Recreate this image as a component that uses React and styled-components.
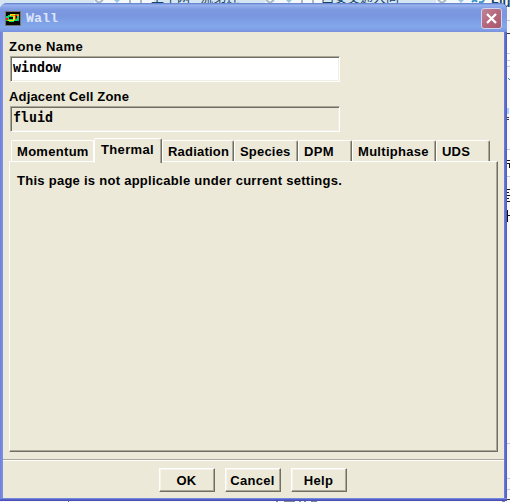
import React from "react";
import styled, { createGlobalStyle } from "styled-components";

const face = "#ece9d8";
const shade = "#aca899";
const dark = "#716f64";

const Global = createGlobalStyle`
  * { box-sizing: border-box; }
  body { margin: 0; overflow: hidden; background: #f6f9fc; }
`;

const Desktop = styled.main`
  position: relative;
  width: 510px;
  height: 502px;
  padding-top: 3px;
  overflow: hidden;
  background: #f8f8f9;
  font: bold 13px "Liberation Sans", Arial, sans-serif;
  color: #000;
`;

const Backdrop = styled.svg`
  position: absolute;
  inset: 0;
`;

const Window = styled.section`
  position: relative;
  display: flex;
  flex-direction: column;
  width: 507px;
  height: 498px;
  padding: 0 3px 3px;
  border-radius: 7px 7px 0 0;
  overflow: hidden;
  background: linear-gradient(90deg, #7080d8 0, #7b92e6 3px, #7b92e6 504px, #7284dc 504px, #6070d0 505px, #5458bc 507px);
  box-shadow: inset 0 -1px #4c50b4, inset 0 -2px #5560c8, inset 0 -3px #7488de;
`;

const TitleBar = styled.header`
  display: flex;
  align-items: center;
  flex: 0 0 29px;
  margin: 0 -3px;
  padding: 1px 5px 0;
  background: linear-gradient(#6280cc 0, #7590dc 1px, #9ab5ee 2px, #8ba7e8 4px, #7c98e0 7px, #7a96df 13px, #7e9fe6 18px, #83a8ea 24px, #7e9ce4 27px, #7890dc 29px);
`;

const Title = styled.h1`
  flex: 1;
  margin: 0 0 0 5px;
  padding-top: 1px;
  font: bold 13.33px "Liberation Mono", monospace;
  color: #dce6fa;
`;

const CloseButton = styled.button`
  display: grid;
  place-items: center;
  width: 21px;
  height: 21px;
  margin-top: 1px;
  padding: 0;
  border: 1px solid #d0d4f0;
  border-radius: 3px;
  background: linear-gradient(135deg, #c08498, #b4687c 50%, #a8586c);
`;

const Body = styled.div`
  display: flex;
  flex-direction: column;
  flex: 1;
  background: ${face};
`;

const Fields = styled.div`
  display: flex;
  flex-direction: column;
  height: 105px;
  padding: 6px 0 0 6px;
`;

const Field = styled.label`
  display: block;
  flex: 0 0 50px;
  width: 332px;
  line-height: 18px;
  letter-spacing: ${(p) => p.$spacing};
`;

const Input = styled.input`
  display: block;
  width: 330px;
  height: 26px;
  margin: 0 0 0 1px;
  padding: 0 2px 4px 2px;
  outline: 0;
  border: 1px solid;
  border-color: ${shade} #fff #fff ${shade};
  border-radius: 0;
  box-shadow: inset 1px 1px ${dark}, inset -1px -1px #f1efe2;
  background: ${(p) => (p.readOnly ? face : "#fff")};
  font: bold 13.3px "DejaVu Sans Mono", monospace;
  color: #000;
`;

const Tabs = styled.nav`
  display: flex;
  align-items: flex-end;
  height: 24px;
  padding-left: 8px;
`;

const Tab = styled.button`
  position: relative;
  z-index: ${(p) => (p.$active ? 1 : 0)};
  width: ${(p) => p.$width}px;
  height: ${(p) => (p.$active ? 25 : 21)}px;
  margin-bottom: ${(p) => (p.$active ? -2 : 0)}px;
  padding: ${(p) => (p.$active ? "0 0 4px 6px" : "1px 0 0 5px")};
  border: 0;
  border-top: 1px solid #fff;
  border-left: 1px solid #fff;
  border-right: 1px solid ${(p) => (p.$flat ? "#fff" : dark)};
  border-radius: 2px 2px 0 0;
  box-shadow: ${(p) => (p.$flat ? "none" : `inset -1px 0 ${shade}`)};
  background: ${face};
  font: inherit;
  letter-spacing: ${(p) => p.$spacing}px;
  color: #000;
  text-align: left;
  white-space: nowrap;
`;

const Panel = styled.section`
  width: 489px;
  height: 291px;
  margin-left: 6px;
  padding: 11px 7px;
  border: 1px solid;
  border-color: #fff ${dark} ${dark} #fff;
  box-shadow: inset -1px -1px ${shade};
  line-height: 16px;
  letter-spacing: 0.27px;
`;

const Footer = styled.footer`
  display: flex;
  justify-content: center;
  align-items: flex-start;
  gap: 10px;
  height: 39px;
  margin-top: 7px;
  padding: 8px 2px 0 0;
  border-top: 1px solid ${shade};
  box-shadow: inset 0 1px #fff;
`;

const Button = styled.button`
  width: 56px;
  height: 24px;
  padding: 0;
  border: 1px solid;
  border-color: #fff ${dark} ${dark} #fff;
  box-shadow: inset -1px -1px ${shade}, inset 1px 1px #f6f4ea;
  background: ${face};
  font: inherit;
  letter-spacing: 0.3px;
  color: #000;
`;

const tabs = [
  { name: "Momentum", width: 83, flat: true, spacing: 0.3 },
  { name: "Thermal", width: 68, active: true, spacing: 0.35 },
  { name: "Radiation", width: 72, spacing: 0.2 },
  { name: "Species", width: 64, spacing: 0.2 },
  { name: "DPM", width: 54, spacing: 0.3 },
  { name: "Multiphase", width: 84, spacing: 0.3 },
  { name: "UDS", width: 54, spacing: 0.2 },
];

function PageBehind() {
  return (
    <Backdrop width="510" height="502" viewBox="0 0 510 502">
      <path fill="#d5e6f2" d="M0 0h454v12H0z" />
      <path fill="#f3f8fc" d="M94 0h60v3H94zM265 0h60v3h-60zM436 0h38v3h-38z" />
      <g fill="none" stroke="#a9bac5" strokeWidth="2">
        <path d="M95 0l4 3 4-3M266 0l4 3 4-3M438 0l4 3 4-3M130 0v3M141 0v3M302 0v3M313 0v3" />
      </g>
      <path fill="#9cc5de" d="M114 0h6l-3 3zM286 0h6l-3 3zM458 0h6l-3 3z" />
      <g fill="#17466c" fontFamily="Noto Sans CJK SC, sans-serif" fontSize="13" fontWeight="400">
        <text x="151" y="2">上十网 - 流弟连</text>
        <text x="321" y="2">西安交通大同</text>
      </g>
      <path fill="none" stroke="#3d96c8" strokeWidth="2" d="M472 2q3-3 5 0M479 2q4 1 5-2" />
      <text x="491" y="7" fill="#17466c" fontFamily="Liberation Sans" fontWeight="bold" fontSize="13">Fluent</text>
      <path fill="#fff" d="M507 35h3v30h-3zM507 150h3v27h-3z" />
      <path stroke="#b8cede" d="M507 20.5h3M507 53.5h3M507 60.5h3M507 66.5h3M507 149.5h3M507 176.5h3M507 443.5h3M507 478.5h3M507 489.5h3" />
      <path stroke="#333" d="M507 33.5h3M507 117.5h2M507 119.5h2M507 499.5h3" />
      <path fill="#add0ff" d="M507 108h2v6h-2z" />
      <path stroke="#3687bd" d="M508 78l2 2M68.5 501v1" />
      <path stroke="#111" d="M507 160.5h3M507 163.5h3M509.5 164v4M507 189.5h3M507 192.5h2M507 195.5h3M507 198.5h2M507 201.5h3M507.5 210v12M507 215.5h3" />
      <path stroke="#7c8b9e" d="M276 501.5h2M284 501.5h11M299 501.5h2M304 501.5h2M311 501.5h6M502 501.5h3" />
    </Backdrop>
  );
}

function AppIcon() {
  return (
    <svg width="16" height="15" viewBox="0 0 16 15" shapeRendering="crispEdges">
      <path fill="#77736d" d="M0 0h16v15H0z" />
      <path fill="#080808" d="M1 1h14v13H1z" />
      <path fill="#10d860" d="M1 5h2V4h3V3h8v7H9v1H4v-1H1z" />
      <path fill="#ffe600" d="M5 3h5v2H5zM8 5h2v4H8zM3 9h6v1H3z" />
      <path fill="#f31b00" d="M1 7h2v2H1zM10 4h2v4h-2z" />
      <path fill="#ff8a00" d="M6 4h4v1H6zM12 3h2v2h-2z" />
      <path fill="#080808" d="M4 6h4v2H4zM11 5h1v2h-1z" />
      <path fill="#00b8c8" d="M12 9h2v1h-2zM1 5h1v1H1z" />
    </svg>
  );
}

export default function App() {
  return (
    <Desktop>
      <Global />
      <PageBehind />
      <Window>
        <TitleBar>
          <AppIcon />
          <Title>Wall</Title>
          <CloseButton aria-label="Close">
            <svg width="13" height="13" viewBox="0 0 13 13">
              <path d="M2 2l9 9M11 2l-9 9" stroke="#fff" strokeWidth="2.3" />
            </svg>
          </CloseButton>
        </TitleBar>
        <Body>
          <Fields>
            <Field $spacing="0.45px">
              Zone Name
              <Input defaultValue="window" />
            </Field>
            <Field $spacing="0.17px">
              Adjacent Cell Zone
              <Input value="fluid" readOnly />
            </Field>
          </Fields>
          <Tabs>
            {tabs.map((t) => (
              <Tab key={t.name} $width={t.width} $active={t.active} $flat={t.flat} $spacing={t.spacing}>
                {t.name}
              </Tab>
            ))}
          </Tabs>
          <Panel>This page is not applicable under current settings.</Panel>
          <Footer>
            <Button>OK</Button>
            <Button>Cancel</Button>
            <Button>Help</Button>
          </Footer>
        </Body>
      </Window>
    </Desktop>
  );
}
